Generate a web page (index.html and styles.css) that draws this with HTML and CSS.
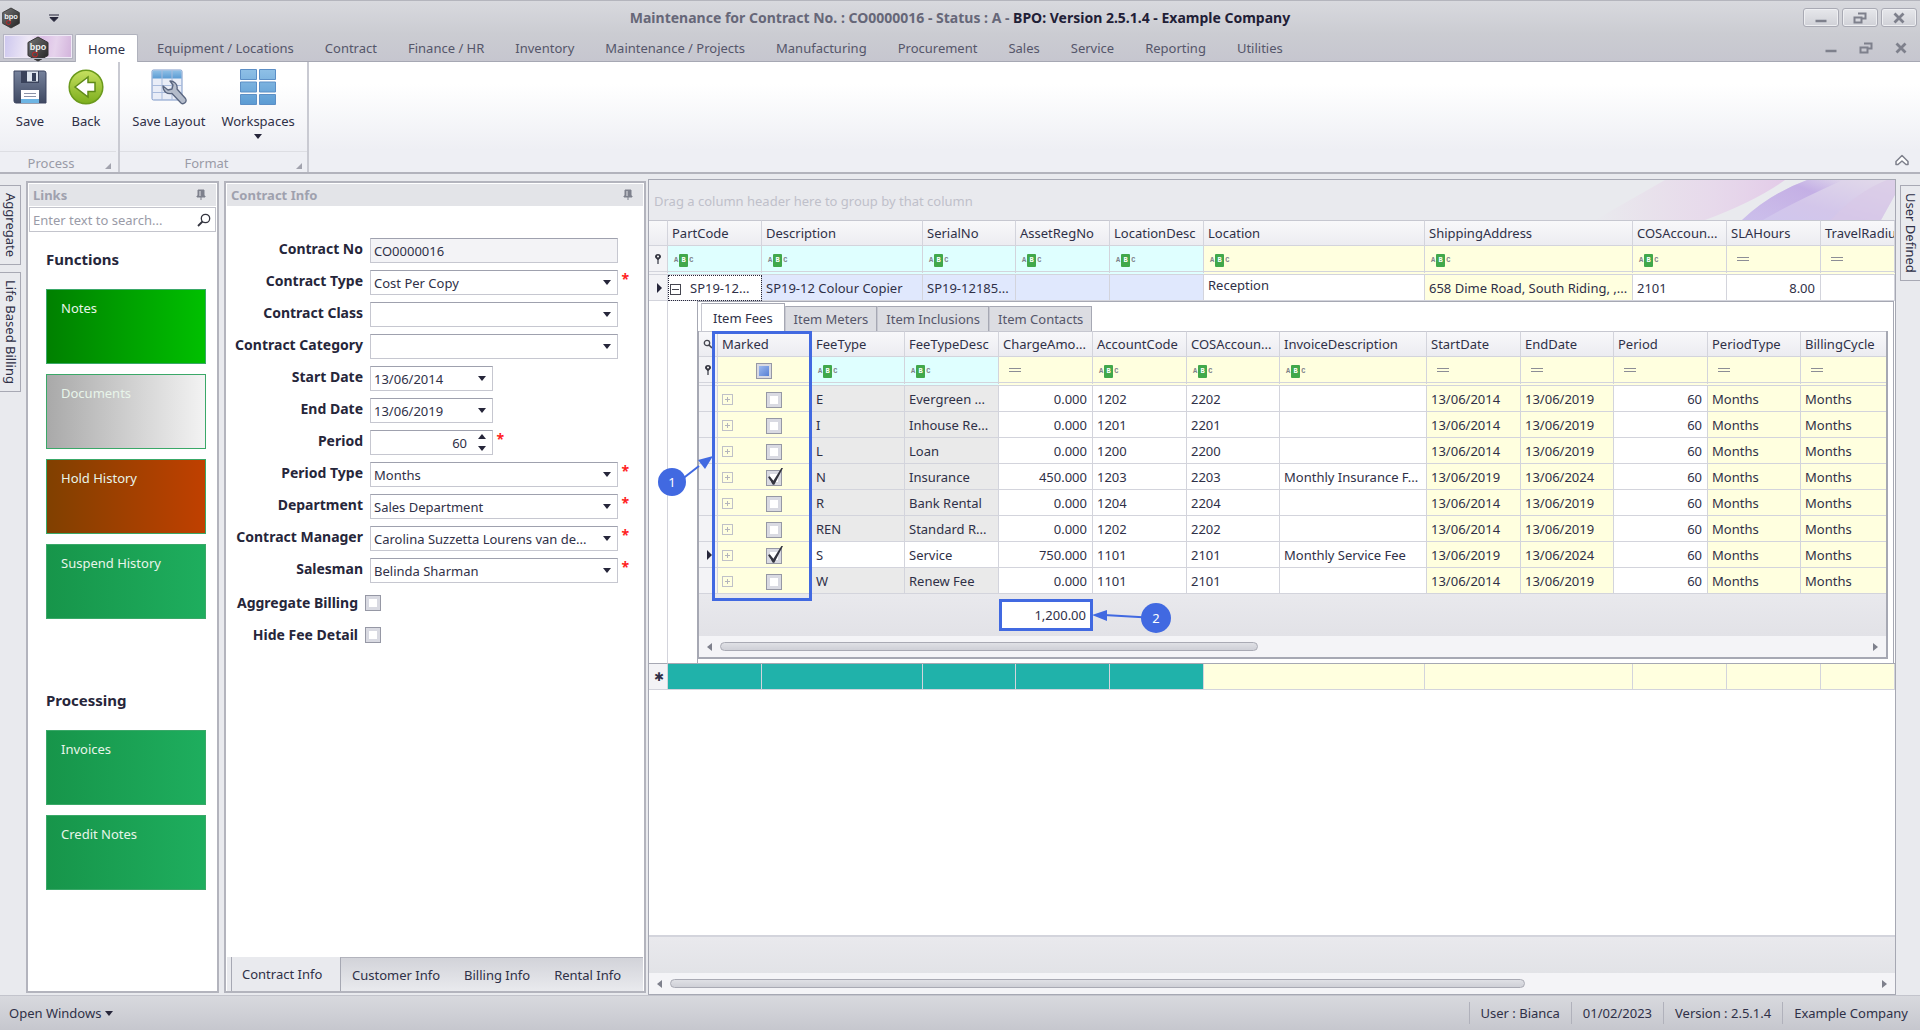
FILE: index.html
```html
<!DOCTYPE html>
<html lang="en">
<head>
<meta charset="utf-8">
<title>BPO: Version 2.5.1.4 - Example Company</title>
<link rel="stylesheet" href="styles.css">
</head>
<body>
<svg class="defs" aria-hidden="true">
  <defs>
    <linearGradient id="gHex" x1="0" y1="0" x2="1" y2="1"><stop offset="0" stop-color="#777"/><stop offset="1" stop-color="#222"/></linearGradient>
    <linearGradient id="gSave" x1="0" y1="0" x2="0" y2="1"><stop offset="0" stop-color="#76829c"/><stop offset="1" stop-color="#3f4962"/></linearGradient>
    <linearGradient id="gBack" x1="0" y1="0" x2="0" y2="1"><stop offset="0" stop-color="#c6e060"/><stop offset="1" stop-color="#7cae1c"/></linearGradient>
    <linearGradient id="gBlue" x1="0" y1="0" x2="0" y2="1"><stop offset="0" stop-color="#8fc0e6"/><stop offset="1" stop-color="#5b9bd3"/></linearGradient>
    <linearGradient id="gPink" x1="0" y1="0" x2="1" y2="0"><stop offset="0" stop-color="#e8cfe6" stop-opacity="0"/><stop offset=".6" stop-color="#e6d3ea" stop-opacity=".7"/><stop offset="1" stop-color="#e3cbe8"/></linearGradient>
    <linearGradient id="gViolet" x1="0" y1="1" x2="1" y2="0"><stop offset="0" stop-color="#cfc6ee"/><stop offset=".4" stop-color="#d3c6ea"/><stop offset="1" stop-color="#e2daea"/></linearGradient>
    <linearGradient id="gStreak" x1="0" y1="1" x2="1" y2="0"><stop offset="0" stop-color="#c3b0e6" stop-opacity=".4"/><stop offset=".7" stop-color="#bfa8e4"/><stop offset="1" stop-color="#c3b0e6" stop-opacity="0"/></linearGradient>
  </defs>
  <symbol id="logo" viewBox="0 0 24 26"><path d="M12 1 22 6.500V19.500L12 25 2 19.500V6.500Z" fill="url(#gHex)" stroke="#333"/><text x="12" y="14" text-anchor="middle" font-size="9" font-weight="bold" font-family="Liberation Sans, sans-serif" fill="#f2f2f2">bpo</text><circle cx="9" cy="18.500" r="2.500" fill="none" stroke="#c22" stroke-width="1"/></symbol>
  <symbol id="pin" viewBox="0 0 10 12"><path d="M2 1h6v6h1v1H1V7h1zM5 8v3" fill="#7e818d" stroke="#7e818d"/><path d="M4 2v5" stroke="#e3e4e8"/></symbol>
  <symbol id="restore" viewBox="0 0 14 12"><path d="M5 1.500h7.500v5h-3M1.500 5.500h7v5h-7z" fill="none" stroke="#7e808c" stroke-width="2"/></symbol>
  <symbol id="minimize" viewBox="0 0 14 12"><path d="M1.500 9h11" stroke="#7e808c" stroke-width="2.500"/></symbol>
  <symbol id="close" viewBox="0 0 14 12"><path d="M2.500 1.500l9 9M11.500 1.500l-9 9" stroke="#7e808c" stroke-width="2.800"/></symbol>
  <symbol id="filterpin" viewBox="0 0 8 12"><path d="M4 1C6 1 7 2.200 7 3.800 7 5.500 5 6 4.600 7v4H3.400V7C3 6 1 5.500 1 3.800 1 2.200 2 1 4 1z" fill="#33343f"/><circle cx="4" cy="3.500" r="1" fill="#fff"/></symbol>
</svg>

<header class="titlebar">
  <div class="quick">
    <svg class="logo-small"><use href="#logo"/></svg>
    <button class="bare" aria-label="Customize quick access"><svg width="10" height="8" viewBox="0 0 10 8"><path d="M0 1h10M1 3.500h8L5 7.500z" fill="#26263a" stroke="#26263a" stroke-width="1"/></svg></button>
  </div>
  <h1 class="title"><span>Maintenance for Contract No. : CO0000016 - Status : A - </span>BPO: Version 2.5.1.4 - Example Company</h1>
  <div class="winbtns">
    <button aria-label="Minimize"><svg><use href="#minimize"/></svg></button>
    <button aria-label="Restore"><svg><use href="#restore"/></svg></button>
    <button aria-label="Close"><svg><use href="#close"/></svg></button>
  </div>
</header>

<nav class="menubar">
  <button class="appbtn" aria-label="Application menu"><svg><use href="#logo"/></svg></button>
  <div class="tabs">
    <button class="tab on">Home</button><button class="tab">Equipment / Locations</button><button class="tab">Contract</button><button class="tab">Finance / HR</button><button class="tab">Inventory</button><button class="tab">Maintenance / Projects</button><button class="tab">Manufacturing</button><button class="tab">Procurement</button><button class="tab">Sales</button><button class="tab">Service</button><button class="tab">Reporting</button><button class="tab">Utilities</button>
  </div>
  <div class="docbtns">
    <button aria-label="Minimize document"><svg><use href="#minimize"/></svg></button>
    <button aria-label="Restore document"><svg><use href="#restore"/></svg></button>
    <button aria-label="Close document"><svg><use href="#close"/></svg></button>
  </div>
</nav>

<section class="ribbon" aria-label="Home">
  <div class="group process">
    <div class="cmds">
      <button class="cmd"><svg viewBox="0 0 36 36"><path d="M2 2h30q2 0 2 2v30H4q-2 0-2-2z" fill="url(#gSave)" stroke="#3c4560"/><path d="M9 2h18v12H9z" fill="#39425b"/><path d="M15 2.500h11v10H15z" fill="#dfe6f0"/><path d="M20 4h4v8h-4z" fill="#36405a"/><path d="M9 21h18v13H9z" fill="#fff"/><path d="M9 30h18v4H9z" fill="#6db5e4"/><path d="M12 24.500h12M12 27.500h12" stroke="#8c93a8"/></svg>Save</button>
      <button class="cmd"><svg viewBox="0 0 36 36"><circle cx="18" cy="18" r="16.800" fill="url(#gBack)" stroke="#6b9a1c" stroke-width="1.500"/><path d="M7 18 20 8v5.500h7v9h-7V28z" fill="#fff" stroke="#5f8a18" stroke-width="1.500"/></svg>Back</button>
    </div>
    <div class="caption">Process<i></i></div>
  </div>
  <div class="group format">
    <div class="cmds">
      <button class="cmd"><svg viewBox="0 0 36 36"><rect x="1" y="1" width="30" height="30" rx="1.500" fill="#e9edf7" stroke="#7d98c8"/><path d="M1.500 1.500h29v8h-29z" fill="url(#gBlue)"/><path d="M1 16.500h30M1 23.500h30M11 1v30M21 1v30" stroke="#a9bbdc"/><path d="M19 12c4 0 8 3 7 8l8.500 9.500c2 3.500-2 6.500-4.500 4.500L21 24.500c-5 1-9-2-9-7.500l5 4 4-1 1-4z" fill="#b4bccb" stroke="#59657f" stroke-width="1.300" stroke-linejoin="round"/></svg>Save Layout</button>
      <button class="cmd"><svg viewBox="0 0 36 36"><g fill="url(#gBlue)" stroke="#5c8fc6"><path d="M.5.500h16v10H.5zM19.500.500h16v10h-16zM.5 13h16v10H.5zM19.500 13h16v10h-16zM.5 25.500h16v10H.5zM19.500 25.500h16v10h-16z"/></g></svg>Workspaces<span class="arrow"></span></button>
    </div>
    <div class="caption">Format<i></i></div>
  </div>
  <button class="bare collapse" aria-label="Collapse ribbon"><svg width="16" height="13" viewBox="0 0 16 13"><path d="M2 7.500 8 1.500l6 6v3h-2L8 7l-4 3.500H2z" fill="#fff" stroke="#7e808c" stroke-width="1.500" stroke-linejoin="round"/></svg></button>
</section>

<main class="work">
  <aside class="dock left"><button>Aggregate</button><button>Life Based Billing</button></aside>

  <section class="panel links">
    <header class="phead"><h2>Links</h2><svg class="pin"><use href="#pin"/></svg></header>
    <label class="search"><input type="search" placeholder="Enter text to search..." aria-label="Search links"><svg width="14" height="14" viewBox="0 0 14 14"><circle cx="8.500" cy="5.500" r="4.200" fill="none" stroke="#33343f" stroke-width="1.300"/><path d="M5.500 8.500 1 13" stroke="#33343f" stroke-width="1.800"/></svg></label>
    <div class="tiles">
      <h3>Functions</h3>
      <button class="tile notes">Notes</button>
      <button class="tile docs">Documents</button>
      <button class="tile hold">Hold History</button>
      <button class="tile">Suspend History</button>
    </div>
    <div class="tiles second">
      <h3>Processing</h3>
      <button class="tile">Invoices</button>
      <button class="tile">Credit Notes</button>
    </div>
  </section>

  <section class="panel info">
    <header class="phead"><h2>Contract Info</h2><svg class="pin"><use href="#pin"/></svg></header>
    <form class="form">
      <label for="no">Contract No</label><div class="f"><input id="no" value="CO0000016" readonly></div>
      <label for="type">Contract Type</label><div class="f drop req"><select id="type"><option>Cost Per Copy</option></select></div>
      <label for="class">Contract Class</label><div class="f drop"><select id="class"><option></option></select></div>
      <label for="cat">Contract Category</label><div class="f drop"><select id="cat"><option></option></select></div>
      <label for="start">Start Date</label><div class="f drop short"><select id="start"><option>13/06/2014</option></select></div>
      <label for="end">End Date</label><div class="f drop short"><select id="end"><option>13/06/2019</option></select></div>
      <label for="period">Period</label><div class="f short req spin"><input id="period" type="number" value="60"><span class="up"></span><span class="down"></span></div>
      <label for="ptype">Period Type</label><div class="f drop req"><select id="ptype"><option>Months</option></select></div>
      <label for="dept">Department</label><div class="f drop req"><select id="dept"><option>Sales Department</option></select></div>
      <label for="mgr">Contract Manager</label><div class="f drop req"><select id="mgr"><option>Carolina Suzzetta Lourens van de...</option></select></div>
      <label for="sales">Salesman</label><div class="f drop req"><select id="sales"><option>Belinda Sharman</option></select></div>
      <label class="wide" for="agg">Aggregate Billing<input id="agg" type="checkbox"></label>
      <label class="wide" for="hide">Hide Fee Detail<input id="hide" type="checkbox"></label>
    </form>
    <footer class="ptabs"><button class="on">Contract Info</button><div><button>Customer Info</button><button>Billing Info</button><button>Rental Info</button></div></footer>
  </section>

  <section class="gridpanel">
    <div class="groupby">Drag a column header here to group by that column
      <svg class="swirl" viewBox="0 0 300 41" preserveAspectRatio="none"><path d="M110 41Q160 22 190 0H70L0 41Z" fill="url(#gPink)"/><path d="M147 41Q175 14 212 0H300V15L286 41Z" fill="url(#gViolet)"/><path d="M147 41Q175 14 212 0h36Q196 24 168 41Z" fill="url(#gStreak)" opacity=".8"/><path d="M236 41Q262 12 292 0H300V15L286 41Z" fill="#d9c8e6" opacity=".6"/></svg>
    </div>
    <table class="grid outer">
      <colgroup><col class="ind"><col class="c94"><col class="c161"><col class="c93"><col class="c94"><col class="c94"><col class="c221"><col class="c208"><col class="c94"><col class="c94"><col></colgroup>
      <thead>
        <tr class="head"><th></th><th>PartCode</th><th>Description</th><th>SerialNo</th><th>AssetRegNo</th><th>LocationDesc</th><th>Location</th><th>ShippingAddress</th><th>COSAccoun...</th><th>SLAHours</th><th>TravelRadius</th></tr>
        <tr class="filter"><td class="ind"><svg class="fp"><use href="#filterpin"/></svg></td><td class="cy"><span class="abc">A<b>B</b>C</span></td><td class="cy"><span class="abc">A<b>B</b>C</span></td><td class="cy"><span class="abc">A<b>B</b>C</span></td><td class="cy"><span class="abc">A<b>B</b>C</span></td><td class="cy"><span class="abc">A<b>B</b>C</span></td><td><span class="abc">A<b>B</b>C</span></td><td><span class="abc">A<b>B</b>C</span></td><td><span class="abc">A<b>B</b>C</span></td><td><span class="eq"></span></td><td><span class="eq"></span></td></tr>
      </thead>
      <tbody>
        <tr class="row"><td class="ind"><span class="cur"></span></td><td class="focus"><span class="exp minus"></span>SP19-12...</td><td class="bl">SP19-12 Colour Copier</td><td class="bl">SP19-12185...</td><td class="bl"></td><td class="bl"></td><td class="top">Reception</td><td class="ye">658 Dime Road, South Riding, ,...</td><td>2101</td><td class="num">8.00</td><td></td></tr>
        <tr class="detail"><td class="ind"></td><td colspan="10">
          <div class="detailbox">
            <div class="dtabs"><button class="on">Item Fees</button><button>Item Meters</button><button>Item Inclusions</button><button>Item Contacts</button></div>
            <div class="inner">
              <table class="grid">
                <colgroup><col class="ind"><col class="c94"><col class="c93"><col class="c94"><col class="c94"><col class="c94"><col class="c93"><col class="c147"><col class="c94"><col class="c93"><col class="c94"><col class="c93"><col></colgroup>
                <thead>
                  <tr class="head"><th class="mag"><svg width="10" height="10" viewBox="0 0 10 10"><circle cx="4" cy="4" r="2.700" fill="none" stroke="#44454f" stroke-width="1.300"/><path d="M6 6l3 3" stroke="#44454f" stroke-width="1.600"/></svg></th><th>Marked</th><th>FeeType</th><th>FeeTypeDesc</th><th>ChargeAmo...</th><th>AccountCode</th><th>COSAccoun...</th><th>InvoiceDescription</th><th>StartDate</th><th>EndDate</th><th>Period</th><th>PeriodType</th><th>BillingCycle</th></tr>
                  <tr class="filter"><td class="ind"><svg class="fp"><use href="#filterpin"/></svg></td><td class="mid"><input type="checkbox" class="mixed" aria-label="Filter marked"></td><td class="cy"><span class="abc">A<b>B</b>C</span></td><td class="cy"><span class="abc">A<b>B</b>C</span></td><td><span class="eq"></span></td><td><span class="abc">A<b>B</b>C</span></td><td><span class="abc">A<b>B</b>C</span></td><td><span class="abc">A<b>B</b>C</span></td><td><span class="eq"></span></td><td><span class="eq"></span></td><td><span class="eq"></span></td><td><span class="eq"></span></td><td><span class="eq"></span></td></tr>
                </thead>
                <tbody>
                  <tr class="row"><td class="ind"></td><td class="mk"><span class="exp"></span><input type="checkbox" aria-label="Mark E"></td><td class="gr">E</td><td class="gr">Evergreen ...</td><td class="num">0.000</td><td>1202</td><td>2202</td><td></td><td class="ye">13/06/2014</td><td class="ye">13/06/2019</td><td class="num">60</td><td class="ye">Months</td><td class="ye">Months</td></tr>
                  <tr class="row"><td class="ind"></td><td class="mk"><span class="exp"></span><input type="checkbox" aria-label="Mark I"></td><td class="gr">I</td><td class="gr">Inhouse Re...</td><td class="num">0.000</td><td>1201</td><td>2201</td><td></td><td class="ye">13/06/2014</td><td class="ye">13/06/2019</td><td class="num">60</td><td class="ye">Months</td><td class="ye">Months</td></tr>
                  <tr class="row"><td class="ind"></td><td class="mk"><span class="exp"></span><input type="checkbox" aria-label="Mark L"></td><td class="gr">L</td><td class="gr">Loan</td><td class="num">0.000</td><td>1200</td><td>2200</td><td></td><td class="ye">13/06/2014</td><td class="ye">13/06/2019</td><td class="num">60</td><td class="ye">Months</td><td class="ye">Months</td></tr>
                  <tr class="row"><td class="ind"></td><td class="mk"><span class="exp"></span><input type="checkbox" checked aria-label="Mark N"></td><td class="gr">N</td><td class="gr">Insurance</td><td class="num">450.000</td><td>1203</td><td>2203</td><td>Monthly Insurance F...</td><td class="ye">13/06/2019</td><td class="ye">13/06/2024</td><td class="num">60</td><td class="ye">Months</td><td class="ye">Months</td></tr>
                  <tr class="row"><td class="ind"></td><td class="mk"><span class="exp"></span><input type="checkbox" aria-label="Mark R"></td><td class="gr">R</td><td class="gr">Bank Rental</td><td class="num">0.000</td><td>1204</td><td>2204</td><td></td><td class="ye">13/06/2014</td><td class="ye">13/06/2019</td><td class="num">60</td><td class="ye">Months</td><td class="ye">Months</td></tr>
                  <tr class="row"><td class="ind"></td><td class="mk"><span class="exp"></span><input type="checkbox" aria-label="Mark REN"></td><td class="gr">REN</td><td class="gr">Standard R...</td><td class="num">0.000</td><td>1202</td><td>2202</td><td></td><td class="ye">13/06/2014</td><td class="ye">13/06/2019</td><td class="num">60</td><td class="ye">Months</td><td class="ye">Months</td></tr>
                  <tr class="row"><td class="ind"><span class="cur"></span></td><td class="mk"><span class="exp"></span><input type="checkbox" checked aria-label="Mark S"></td><td>S</td><td>Service</td><td class="num">750.000</td><td>1101</td><td>2101</td><td>Monthly Service Fee</td><td class="ye">13/06/2019</td><td class="ye">13/06/2024</td><td class="num">60</td><td class="ye">Months</td><td class="ye">Months</td></tr>
                  <tr class="row"><td class="ind"></td><td class="mk"><span class="exp"></span><input type="checkbox" aria-label="Mark W"></td><td class="gr">W</td><td class="gr">Renew Fee</td><td class="num">0.000</td><td>1101</td><td>2101</td><td></td><td class="ye">13/06/2014</td><td class="ye">13/06/2019</td><td class="num">60</td><td class="ye">Months</td><td class="ye">Months</td></tr>
                </tbody>
                <tfoot><tr><td colspan="4"></td><td class="sum"><div>1,200.00</div></td><td colspan="8"></td></tr></tfoot>
              </table>
              <div class="scroll"><span class="sl"></span><div class="track"><div class="thumb" style="width:47%"></div></div><span class="sr"></span></div>
              <div class="box1"></div>
              <svg class="notes1" width="56" height="60" viewBox="0 0 56 60"><path d="M15 45 42 24" stroke="#4169e1" stroke-width="2"/><path d="M56 14 48 27 41 18z" fill="#4169e1"/><circle cx="15" cy="40" r="14" fill="#4169e1"/><text x="15" y="45" text-anchor="middle" font-size="13" fill="#fff">1</text></svg>
              <svg class="notes2" width="80" height="32" viewBox="0 0 80 32"><path d="M12 13 64 16" stroke="#4169e1" stroke-width="2"/><path d="M0 13 15 8v11z" fill="#4169e1"/><circle cx="64" cy="16" r="15" fill="#4169e1"/><text x="64" y="21" text-anchor="middle" font-size="13" fill="#fff">2</text></svg>
            </div>
          </div>
        </td></tr>
        <tr class="new"><td class="ind">✱</td><td></td><td></td><td></td><td></td><td></td><td class="ye"></td><td class="ye"></td><td class="ye"></td><td class="ye"></td><td class="ye"></td></tr>
      </tbody>
    </table>
    <div class="space"></div>
    <div class="gfoot"></div>
    <div class="scroll"><span class="sl"></span><div class="track"><div class="thumb" style="width:71%"></div></div><span class="sr"></span></div>
  </section>

  <aside class="dock right"><button>User Defined</button></aside>
</main>

<footer class="status">
  <button class="bare">Open Windows<span class="arrow"></span></button>
  <ul><li>User : Bianca</li><li>01/02/2023</li><li>Version : 2.5.1.4</li><li>Example Company</li></ul>
</footer>
</body>
</html>
```
FILE: styles.css
```css
* { box-sizing: border-box; }
body { margin: 0; min-height: 100vh; display: flex; flex-direction: column; font: 13px/18px "Noto Sans", Tahoma, sans-serif; color: #2f3047; background: #e9eaee; overflow: hidden; }
button, input, select { font: inherit; color: inherit; margin: 0; }
button { border: 0; background: none; padding: 0; }
svg { display: block; }
.defs { position: absolute; width: 0; height: 0; }
h1, h2, h3 { margin: 0; }

.titlebar { height: 34px; display: grid; grid-template-columns: 1fr auto 1fr; align-items: center; background: linear-gradient(#d8d9de, #cbccd2); border-top: 1px solid #b4b5bd; }
.quick { display: flex; align-items: center; gap: 28px; padding-left: 1px; }
.logo-small { width: 20px; height: 22px; }
.title { font-size: 14px; font-weight: 700; color: #1f2036; }
.title span { color: #666778; }
.winbtns { display: flex; justify-content: flex-end; gap: 3px; padding-right: 3px; }
.winbtns button { width: 36px; height: 19px; border: 1px solid #a9aab4; border-radius: 3px; background: linear-gradient(#e6e7eb, #d0d1d7); box-shadow: inset 0 0 0 1px #eeeff2; display: grid; place-items: center; }
.winbtns svg, .docbtns svg { width: 14px; height: 12px; }

.menubar { height: 28px; display: flex; background: linear-gradient(#cbccd2, #c6c6cf); border-bottom: 1px solid #a6a8b3; padding: 0 12px 0 4px; }
.appbtn { width: 68px; height: 23px; border: 1px solid #efeaf6; outline: 1px solid #b5b5c2; background: linear-gradient(100deg, #cdc7ee, #eee8f6 35%, #dcbfe6 55%, #e6d3ec 75%, #d3b4dc); display: grid; place-items: center; margin-top: 1px; }
.appbtn svg { width: 24px; height: 26px; }
.tabs { display: flex; gap: 7px; padding-left: 3px; flex: 1; }
.tab { height: 28px; padding: 0 12px; color: #55566a; white-space: nowrap; }
.tab.on { background: #fff; color: #2f3047; border: 1px solid #b0b2bd; border-bottom: 0; border-radius: 2px 2px 0 0; }
.docbtns { display: flex; gap: 21px; align-items: center; }

.ribbon { height: 112px; display: flex; background: linear-gradient(#fff 20%, #eeeff4 80%); border-bottom: 2px solid #b2b3bc; position: relative; }
.group { display: flex; flex-direction: column; justify-content: space-between; border-right: 2px solid #c9cad2; }
.process { width: 120px; padding-right: 2px; }
.format { width: 189px; }
.cmds { display: flex; justify-content: center; gap: 20px; padding-top: 7px; }
.format .cmds { gap: 16px; }
.cmd { display: flex; flex-direction: column; align-items: center; gap: 7px; white-space: nowrap; }
.cmd svg { width: 36px; height: 36px; }
.arrow { border: 4px solid transparent; border-top: 5px solid #26263a; border-bottom: 0; display: inline-block; }
.cmd .arrow { margin-top: -3px; }
.process .cmd { min-width: 36px; }
.caption { height: 21px; border-top: 1px solid #dddee3; text-align: center; color: #9a9ba7; line-height: 22px; position: relative; padding-right: 14px; }
.caption i { position: absolute; right: 5px; bottom: 3px; border: 3px solid #a2a3ae; border-left-color: transparent; border-top-color: transparent; }
.collapse { position: absolute; right: 10px; bottom: 5px; }

.work { flex: 1; display: flex; min-height: 0; padding-top: 5px; }
.dock { display: flex; flex-direction: column; gap: 7px; padding-top: 6px; }
.dock button { writing-mode: vertical-rl; border: 1px solid #a8a9b4; padding: 7px 0 7px 2px; width: 21px; background: #e9eaee; line-height: 18px; white-space: nowrap; }
.dock.left { width: 26px; }
.dock.left button { border-left: 0; }
.dock.right { width: 20px; }
.dock.right button { border-right: 0; width: 20px; }
.dock.right { margin-left: 4px; }

.panel { background: #fff; border: 2px solid #b3b4bd; margin: 2px 0; display: flex; flex-direction: column; }
.phead { height: 22px; display: flex; justify-content: space-between; align-items: center; background: #e3e4e8; padding: 0 10px 0 4px; margin: 1px; }
.phead h2 { font-size: 13px; color: #9fa1ae; }
.pin { width: 10px; height: 12px; }
.links { width: 193px; margin-right: 5px; }
.search { display: flex; align-items: center; height: 25px; border: 1px solid #c3c4cc; margin: 0 1px; padding: 0 4px 0 3px; }
.search input { flex: 1; min-width: 0; border: 0; outline: 0; padding: 0; background: none; }
.search input::placeholder { color: #9a9ba7; opacity: 1; }
.tiles { padding: 17px 11px 0 18px; display: grid; gap: 10px; }
.tiles.second { padding-top: 71px; }
.tiles h3 { font-size: 15px; line-height: 20px; margin-bottom: 10px; color: #26263a; }
.tile { height: 75px; border: 1px solid #3aa868; background: linear-gradient(90deg, #17954a, #1eae5e); color: #e8f5ea; text-align: left; padding: 9px 14px; display: flex; align-items: flex-start; line-height: 18px; }
.notes { background: linear-gradient(90deg, #008000, #00c000); }
.docs { background: linear-gradient(90deg, #a9a9a9, #f3f3f3); }
.hold { background: linear-gradient(90deg, #804000, #c04000); }

.info { width: 422px; margin-right: 2px; }
.form { display: grid; grid-template-columns: 137px 1fr; gap: 7px 7px; padding: 31px 26px 0 0; flex: 1; align-content: start; }
.form label { font-size: 14px; font-weight: 700; text-align: right; line-height: 22px; white-space: nowrap; color: #26263a; }
.form .wide { grid-column: 1; display: flex; justify-content: flex-end; align-items: center; gap: 7px; height: 25px; margin-right: -18px; }
.f { position: relative; height: 25px; width: 100%; }
.f.short { width: 123px; }
.f input, .f select { width: 100%; height: 25px; border: 1px solid #c6c7d0; border-top-color: #9fa1ae; background: #fff; padding: 0 3px; outline: 0; appearance: none; border-radius: 0; display: block; }
.f input[readonly] { background: #f3f3f6; }
.f.drop::before { content: ""; position: absolute; right: 7px; top: 10px; border: 4px solid transparent; border-top: 5px solid #26263a; border-bottom: 0; }
.f.req::after { content: "*"; position: absolute; right: -11px; top: 0; color: #f22; font-size: 14px; font-weight: 700; }
.f.spin input { text-align: right; padding-right: 25px; appearance: textfield; }
.spin input::-webkit-inner-spin-button { appearance: none; }
.up, .down { position: absolute; right: 7px; border: 4px solid transparent; }
.up { top: 4px; border-top: 0; border-bottom: 5px solid #26263a; }
.down { bottom: 4px; border-bottom: 0; border-top: 5px solid #26263a; }
input[type=checkbox] { appearance: none; width: 16px; height: 16px; border: 1px solid #9698a5; background: #fff; box-shadow: inset 0 0 0 3px #d9dae2; position: relative; flex: none; vertical-align: middle; }
input[type=checkbox]:checked::after { content: ""; position: absolute; left: 1px; top: -3px; width: 15px; height: 17px; background: #33343f; clip-path: polygon(0 55%, 12% 50%, 36% 76%, 90% 0, 100% 2%, 42% 100%, 32% 100%); }
input.mixed { background: linear-gradient(135deg, #a9c3f2, #4a75d0); box-shadow: inset 0 0 0 2px #d9dae2; }

.ptabs { height: 34px; display: flex; background: #e9eaee; padding-left: 4px; margin: 0 1px; }
.ptabs button { white-space: nowrap; }
.ptabs .on { width: 109px; border-left: 1px solid #a6a8b3; text-align: left; padding-left: 10px; }
.ptabs div { flex: 1; display: flex; gap: 24px; padding-left: 11px; border-left: 1px solid #a6a8b3; border-top: 1px solid #b3b4bd; background: linear-gradient(#d2d3d9, #e9eaee); }

.gridpanel { flex: 1; min-width: 0; background: #fff; border: 1px solid #a6a8b3; display: flex; flex-direction: column; }
.groupby { height: 40px; background: #e9eaee; padding: 11px 5px; line-height: 20px; color: #bfc0ca; position: relative; }
.swirl { position: absolute; right: 0; top: 0; width: 300px; height: 40px; }
.grid { width: 100%; table-layout: fixed; border-collapse: separate; border-spacing: 0; }
col.ind { width: 19px; }
.c93 { width: 93px; }
.c94 { width: 94px; }
.c147 { width: 147px; }
.c161 { width: 161px; }
.c208 { width: 208px; }
.c221 { width: 221px; }
.grid th, .grid td { padding: 0 5px 0 4px; border-right: 1px solid #d3d4dc; border-bottom: 1px solid #d3d4dc; white-space: nowrap; overflow: hidden; text-align: left; font-weight: 400; vertical-align: middle; }
.grid .head th { height: 26px; background: linear-gradient(#f8f8fa, #ececf1); border-top: 1px solid #c6c7d0; }
.grid .head .mag { padding: 0 0 0 4px; }
.grid .filter td { height: 29px; background: #ffffdf; border-bottom: 4px double #d3d4dc; }
.grid .filter .cy { background: #dfffff; }
.grid .filter .ind, .grid td.ind { background: #f3f3f6; padding: 0 0 0 5px; }
.fp { width: 8px; height: 12px; }
.row td { height: 26px; }
.grid .ye, .grid .mk { background: #ffffdf; }
.grid .gr { background: #eaeaea; }
.grid .bl { background: #e0e8fd; }
.grid .num { text-align: right; }
.grid .top { vertical-align: top; line-height: 20px; }
.grid .focus { outline: 1px dotted #26263a; outline-offset: -1px; padding: 0 2px; }
.grid td.mid { text-align: center; }
.mk input { margin-left: 33px; }
.exp { display: inline-block; width: 11px; height: 11px; border: 1px solid #c0c1c8; vertical-align: middle; background: linear-gradient(#b4b5bc, #b4b5bc) center / 5px 1px no-repeat, linear-gradient(#b4b5bc, #b4b5bc) center / 1px 5px no-repeat; }
.exp.minus { border-color: #44454f; background: linear-gradient(#44454f, #44454f) center / 7px 1px no-repeat; margin-right: 9px; }
.cur { display: block; width: 0; border: 5px solid transparent; border-left: 5px solid #26263a; border-right: 0; margin-left: 3px; }
.abc { display: inline-flex; align-items: center; gap: 1px; font: 700 7px/12px "Liberation Mono", monospace; color: #7e8188; margin-left: 2px; vertical-align: middle; }
.abc b { background: #41a84b; color: #fff; width: 9px; height: 13px; text-align: center; border-radius: 1px; }
.eq { display: block; width: 12px; height: 4px; border: 1px solid #8c8d96; border-width: 1px 0; margin-left: 6px; }
.grid .detail > td { padding: 0 1px 0 29px; border-bottom: 1px solid #a6a8b3; background: #fff; border-right: 0; overflow: visible; }
.grid .detail > td.ind { padding: 0; border-right: 1px solid #d3d4dc; }
.detailbox { border: 1px solid #a6a8b3; border-bottom: 0; padding: 1px 5px 4px 0; }
.dtabs { display: flex; align-items: flex-end; padding-left: 3px; height: 28px; }
.dtabs button { height: 25px; border: 1px solid #a6a8b3; border-bottom: 0; border-left-color: #c6c7d0; background: #dcdde2; padding: 0 8px; color: #55566a; }
.dtabs .on { height: 28px; background: #fff; padding: 0 11px; color: #2f3047; }
.inner { position: relative; border: 1px solid #a6a8b3; border-width: 0 2px 2px 1px; }
.inner .grid tr > :last-child { border-right: 0; }
tfoot td { height: 42px; background: linear-gradient(#e9e9ed, #e2e2e7); }
.inner .grid tfoot td { border-right: 0; border-bottom: 0; }
.inner .grid tfoot .sum { padding: 0; }
.sum div { height: 32px; border: 3px solid #4169e1; background: #fff; text-align: right; padding: 0 4px; line-height: 26px; }
.scroll { height: 21px; display: flex; align-items: center; gap: 8px; background: #f4f4f7; padding: 0 8px; }
.track { flex: 1; }
.thumb { height: 9px; border: 1px solid #a9aab4; border-radius: 5px; background: linear-gradient(#dfe0e5, #cfd0d7); }
.sl, .sr { border: 4px solid transparent; }
.sl { border-left: 0; border-right: 5px solid #7e808c; }
.sr { border-right: 0; border-left: 5px solid #7e808c; }
.box1 { position: absolute; left: 13px; top: 0; width: 100px; height: 270px; border: 3px solid #4169e1; }
.notes1 { position: absolute; left: -42px; top: 111px; }
.notes2 { position: absolute; left: 393px; top: 271px; }
.new td { height: 26px; background: #20b2aa; }
.new td.ind { font-size: 12px; }
.space { flex: 1; }
.gfoot { height: 38px; border-top: 2px solid #d3d4dc; background: linear-gradient(#e9e9ed, #e2e3e7); }

.status { height: 35px; display: flex; justify-content: space-between; align-items: center; padding: 0 12px 0 9px; background: linear-gradient(#d8d9de, #c6c7ce); border-top: 1px solid #c3c4cc; }
.status .arrow { margin-left: 4px; vertical-align: 2px; }
.status ul { display: flex; list-style: none; margin: 0; padding: 0; }
.status li { padding: 2px 11px; border-left: 1px solid #b0b1bb; }
.status li:last-child { padding-right: 0; }
```
